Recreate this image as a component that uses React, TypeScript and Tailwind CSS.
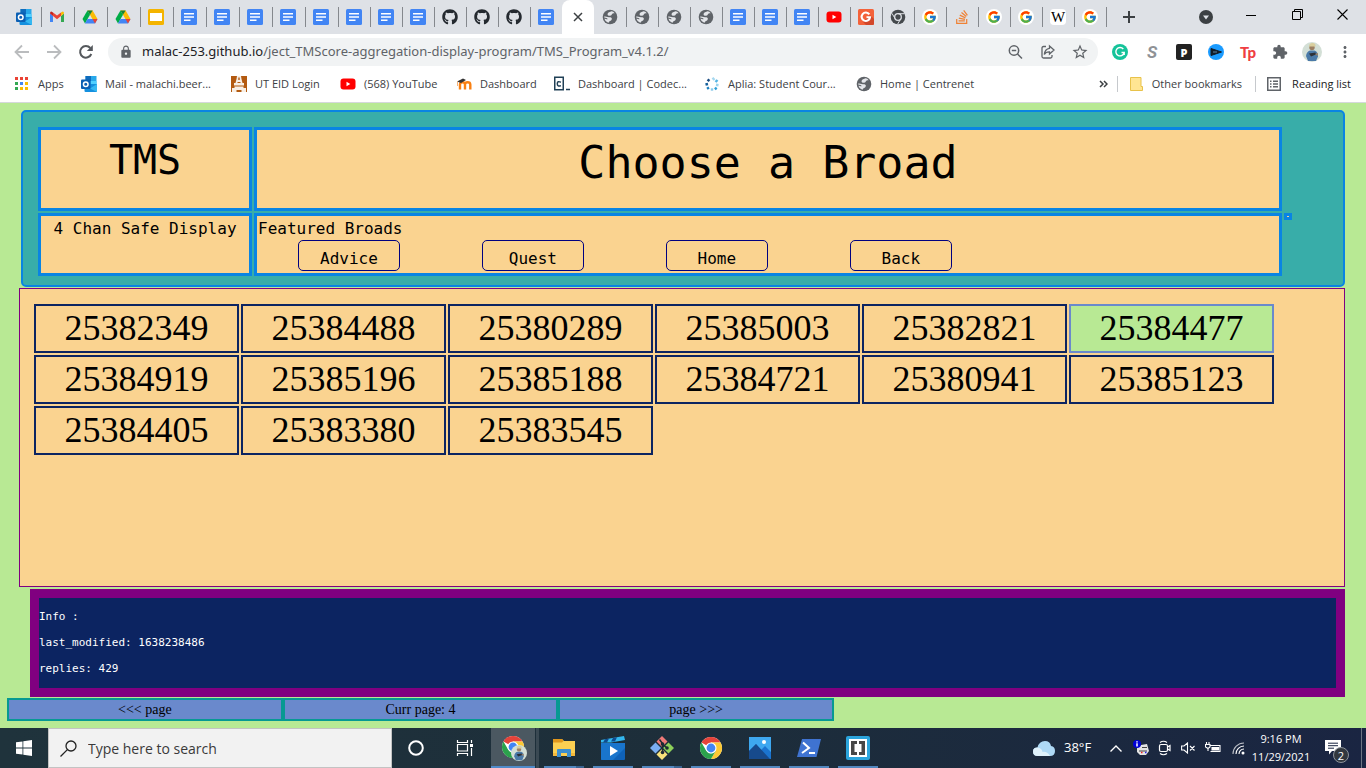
import { useState } from "react";
import type { ReactNode } from "react";
import { FaGithub, FaStackOverflow } from "react-icons/fa";
import { FcGoogle } from "react-icons/fc";
import { MdLock, MdExtension, MdMoreVert, MdStarBorder } from "react-icons/md";

/* ---------- favicons ---------- */

const Outlook = () => (
  <svg viewBox="0 0 16 16" className="size-4">
    <rect x="4.5" y="0" width="11" height="11" fill="#28a8ea" />
    <rect x="4.5" y="0" width="5.5" height="5" fill="#0f6cbd" />
    <rect x="10" y="5" width="5.5" height="4" fill="#50d0ff" />
    <path d="M3.500 8 L16 8 V15 Q16 16 15 16 H4.500 Q3.500 16 3.500 15Z" fill="#1490df" />
    <path d="M16 8 L9 12.500 L16 16Z" fill="#35b8f1" />
    <rect x="0" y="3.500" width="9.500" height="9.500" rx="1" fill="#0a5fb4" />
    <circle cx="4.750" cy="8.250" r="2.300" fill="none" stroke="#fff" strokeWidth="1.500" />
  </svg>
);

const Gmail = () => (
  <svg viewBox="0 0 16 16" className="size-4">
    <path d="M1 4.500V13h3V7Z" fill="#4285f4" />
    <path d="M15 4.500V13h-3V7Z" fill="#34a853" />
    <path d="M1 4.500 4 7V3.500L2.800 2.700Q1 2.200 1 4.500Z" fill="#c5221f" />
    <path d="M15 4.500 12 7V3.500L13.200 2.700Q15 2.200 15 4.500Z" fill="#fbbc04" />
    <path d="M4 3.500 8 6.500 12 3.500V7L8 10.200 4 7Z" fill="#ea4335" />
  </svg>
);

const Drive = () => (
  <svg viewBox="0 0 16 16" className="size-4">
    <path d="M5.400 1.500H10.600L15.500 10H10.400L8 5.800Z" fill="#fbbc04" />
    <path d="M5.400 1.500H10.600L8 5.800Z" fill="#188038" />
    <path d="M.5 10 5.400 1.500 8 5.800 3 14.500Z" fill="#00ac47" />
    <path d="M5.500 10H15.500L13 14.500H3Z" fill="#4285f4" />
    <path d="M10.500 10H15.500L13 14.500Z" fill="#ea4335" />
  </svg>
);

const Slides = () => (
  <svg viewBox="0 0 16 16" className="size-4">
    <rect width="16" height="16" rx="1.500" fill="#f4b400" />
    <rect x="2" y="4" width="12" height="8" fill="#fff" />
  </svg>
);

const Docs = () => (
  <svg viewBox="0 0 16 16" className="size-4">
    <rect width="16" height="16" rx="1.500" fill="#4285f4" />
    <path d="M3 4h10v1.500H3zM3 7.200h10v1.500H3zM3 10.500h6.500v1.500H3z" fill="#fff" />
  </svg>
);

const GitHub = () => <FaGithub className="size-4 text-[#24292f]" />;

const Globe = () => (
  <svg viewBox="0 0 16 16" className="size-4">
    <circle cx="8" cy="8" r="7.300" fill="#5f6368" />
    <path d="M9.500 2.300Q5.500 3.500 5.500 5.300 5.500 6.800 7.500 6.800 9.500 6.800 9.800 5.500 10.500 4.200 11.800 4.300L12.700 4.200Q11.500 2.500 9.500 2.300Z" fill="#e4e6ea" />
    <path d="M2.200 7.500Q4 7.200 5.500 8 7 8.200 8.500 8.200 10.300 8.800 9.800 10.300 9.500 12 7.500 12.200L6.500 13.700Q3 12.500 2.500 9.500 4.500 10.700 5.800 10 5 8.500 2.200 8.500Z" fill="#e4e6ea" />
  </svg>
);

const YouTube = () => (
  <svg viewBox="0 0 16 16" className="size-4">
    <rect x="0.500" y="2.500" width="15" height="11" rx="3" fill="#f00" />
    <path d="M6.500 5.700v4.600L10.300 8z" fill="#fff" />
  </svg>
);

const OrangeG = () => (
  <svg viewBox="0 0 16 16" className="size-4">
    <rect width="16" height="16" rx="1.500" fill="#f4623a" />
    <path d="M5 13 12 6 16 10V14.500Q16 16 14.500 16H8Z" fill="#d2472a" />
    <path d="M11.300 5.400A4.200 4.200 0 1 0 12 8.300H8.500" fill="none" stroke="#fff" strokeWidth="2.100" />
  </svg>
);

const DarkChrome = () => (
  <svg viewBox="0 0 16 16" className="size-4">
    <circle cx="8" cy="8" r="7.300" fill="#45494d" />
    <circle cx="8" cy="8" r="3.300" fill="none" stroke="#dee1e6" strokeWidth="1.300" />
    <path d="M8 4.700H14.700M5.200 9.700 1.900 4.300M10.800 9.700 7.600 15.200" stroke="#dee1e6" strokeWidth="1" />
  </svg>
);

const Google = () => (
  <span className="flex size-4 items-center justify-center rounded-full bg-white">
    <FcGoogle className="size-[14px]" />
  </span>
);

const Stack = () => <FaStackOverflow className="size-4 text-[#ef8236]" />;

const Wiki = () => (
  <span className="flex size-4 items-center justify-center rounded-sm bg-white font-['Liberation_Serif',serif] text-[15px] leading-none text-black">
    W
  </span>
);

const AppsGrid = () => (
  <svg viewBox="0 0 16 16" className="size-4">
    {["#ea4335", "#ea4335", "#ea4335", "#34a853", "#4285f4", "#fbbc04", "#34a853", "#fbbc04", "#fbbc04"].map((c, i) => (
      <rect key={i} x={1 + (i % 3) * 5} y={1 + Math.floor(i / 3) * 5} width="3" height="3" fill={c} />
    ))}
  </svg>
);

const Tower = () => (
  <svg viewBox="0 0 16 16" className="size-4">
    <rect width="16" height="16" fill="#b35a10" />
    <path d="M6 0h4l.5 3 1 4h1.500v2.500H3V7h1.500l1-4z" fill="#f7efe6" />
    <path d="M3.500 10.500h9V12H15v4h-4.500v-2h-5v2H1v-4h2.500z" fill="#f7efe6" />
    <path d="M7.300 1.500h1.400V4H7.300zM6.500 6h3v1h-3z" fill="#b35a10" />
  </svg>
);

const Moodle = () => (
  <svg viewBox="0 0 16 16" className="size-4">
    <path d="M4 13.500V8.500q0-2.300 2.500-2.300T9 8.500v5M9 8.500q0-2.300 2.600-2.300T14.300 8.500v5" fill="none" stroke="#f98012" strokeWidth="2.400" />
    <path d="M1 5.500 7 2.500 10 4 5 7Z" fill="#333" />
    <path d="M1.500 5.500V10" stroke="#f3b27a" strokeWidth="1" />
  </svg>
);

const Codecademy = () => (
  <svg viewBox="0 0 16 16" className="size-4">
    <rect x="0.750" y="1.250" width="8.500" height="12.500" fill="none" stroke="#204056" strokeWidth="1.500" />
    <path d="M6.900 6.200Q3.300 4.500 3.300 7.800T6.900 9.600M12 13.500h4" fill="none" stroke="#204056" strokeWidth="1.500" />
  </svg>
);

const Aplia = () => (
  <svg viewBox="0 0 16 16" className="size-4" fill="none" strokeWidth="2.400">
    <path d="M8.500 1.800 10.500 4" stroke="#a7d8ef" />
    <path d="M13.500 4 11.500 6" stroke="#54b4e4" />
    <path d="M14.500 9.200 12 8.800" stroke="#9dd4ee" />
    <path d="M12.500 13.500 11 11.500" stroke="#2e9fd8" />
    <path d="M8 14.700V12.300" stroke="#8dcbea" />
    <path d="M3 12.800 5 11.500" stroke="#1c7fc0" />
    <path d="M1.500 8.500 4 8" stroke="#155f9a" />
    <path d="M3.500 3.500 5.500 5" stroke="#184a80" />
  </svg>
);

/* ---------- browser chrome ---------- */

type Tab = { icon: () => ReactNode; title: string };
const tab = (icon: () => ReactNode, title: string): Tab => ({ icon, title });

const wideTabs: Tab[] = [
  tab(Outlook, "Outlook"),
  tab(Gmail, "Gmail"),
  tab(Drive, "Drive"),
  tab(Drive, "Drive"),
  tab(Slides, "Slides"),
  ...Array.from({ length: 5 }, () => tab(Docs, "Docs")),
];
const leftTabs: Tab[] = [
  ...Array.from({ length: 3 }, () => tab(Docs, "Docs")),
  ...Array.from({ length: 3 }, () => tab(GitHub, "GitHub")),
  tab(Docs, "Docs"),
];
const rightTabs: Tab[] = [
  ...Array.from({ length: 4 }, () => tab(Globe, "Page")),
  ...Array.from({ length: 3 }, () => tab(Docs, "Docs")),
  tab(YouTube, "YouTube"),
  tab(OrangeG, "G"),
  tab(DarkChrome, "Chrome"),
  tab(Google, "Google"),
  tab(Stack, "Stack Overflow"),
  tab(Google, "Google"),
  tab(Google, "Google"),
  tab(Wiki, "Wikipedia"),
  tab(Google, "Google"),
];

function TabButton({ item, wide, first }: { item: Tab; wide?: boolean; first?: boolean }) {
  const Icon = item.icon;
  return (
    <button aria-label={item.title} className={`relative flex h-[34px] shrink-0 items-center pl-2 ${wide ? "w-[33px]" : "w-8"}`}>
      {!first && <span className="absolute top-[7px] left-0 h-5 w-px bg-[#85888d]" />}
      <Icon />
    </button>
  );
}

function TabStrip() {
  return (
    <div className="flex h-[34px] items-center bg-[#dee1e6] pl-2">
      {wideTabs.map((t, i) => (
        <TabButton key={i} item={t} wide first={i === 0} />
      ))}
      {leftTabs.map((t, i) => (
        <TabButton key={i} item={t} />
      ))}
      <button aria-label="Close tab" className="flex h-[34px] w-8 shrink-0 items-center justify-center rounded-t-lg bg-white">
        <svg viewBox="0 0 10 10" className="size-[10px]" stroke="#3c4043" strokeWidth="1.500">
          <path d="M1 1 9 9M9 1 1 9" />
        </svg>
      </button>
      {rightTabs.map((t, i) => (
        <TabButton key={i} item={t} first={i === 0} />
      ))}
      <span className="h-5 w-px bg-[#85888d]" />
      <button aria-label="New tab" className="ml-4">
        <svg viewBox="0 0 12 12" className="size-3" stroke="#3c4043" strokeWidth="2">
          <path d="M6 0V12M0 6H12" />
        </svg>
      </button>
      <div className="ml-auto flex items-center pr-[18px]">
        <button aria-label="Search tabs" className="mr-[33px]">
          <svg viewBox="0 0 14 14" className="size-[14px]">
            <circle cx="7" cy="7" r="7" fill="#3c4043" />
            <path d="M4 5.500h6L7 9.500z" fill="#dee1e6" />
          </svg>
        </button>
        <button aria-label="Minimize" className="mr-9 mb-1">
          <svg viewBox="0 0 10 10" className="size-[10px]" stroke="#000"><path d="M0 5.500H10" /></svg>
        </button>
        <button aria-label="Restore" className="mr-[34px] mb-1.5">
          <svg viewBox="0 0 11 11" className="size-[11px]" stroke="#000" fill="none">
            <path d="M.5 2.500h8v8h-8zM2.500 2.500v-2h8v8h-2" />
          </svg>
        </button>
        <button aria-label="Close" className="mb-1.5">
          <svg viewBox="0 0 11 11" className="size-[11px]" stroke="#000" strokeWidth="1.100"><path d="M.5.5 10.500 10.500M10.500.5.5 10.500" /></svg>
        </button>
      </div>
    </div>
  );
}

const Person = ({ className }: { className: string }) => (
  <svg viewBox="0 0 20 20" className={className}>
    <circle cx="10" cy="10" r="10" fill="#d3dfd6" />
    <path d="M4 14Q4.500 9.500 8 8.500h4.500q3.500 1 3.500 6L14 19H6Z" fill="#4a7aa8" />
    <circle cx="10" cy="5.500" r="2.700" fill="#9c7f62" />
    <path d="M7 4.500Q7 1 10.500 1T13.500 4.500Z" fill="#d9cf9e" />
    <path d="M7 11.500 13.500 10.500 14 12.500 9 14.500Z" fill="#2b3138" />
    <path d="M13 12 16 11 15.500 14Z" fill="#9c7f62" />
  </svg>
);

function Toolbar() {
  return (
    <div className="flex h-9 items-center bg-white pr-3 pl-[14px]">
      <button aria-label="Back" className="w-8">
        <svg viewBox="0 0 16 16" className="size-4" fill="none" stroke="#babcbe" strokeWidth="1.800"><path d="M15 8H2M8 1.500 1.500 8 8 14.500" /></svg>
      </button>
      <button aria-label="Forward" className="w-8">
        <svg viewBox="0 0 16 16" className="size-4" fill="none" stroke="#babcbe" strokeWidth="1.800"><path d="M1 8H14M8 1.500 14.500 8 8 14.500" /></svg>
      </button>
      <button aria-label="Reload" className="mr-[14px]">
        <svg viewBox="0 0 16 16" className="size-4" fill="none" stroke="#54585c" strokeWidth="2">
          <path d="M13.300 10A5.800 5.800 0 1 1 12.300 4" />
          <path d="M14.800 1V7H8.800Z" fill="#54585c" stroke="none" />
        </svg>
      </button>
      <div className="flex h-7 flex-1 items-center rounded-full bg-[#f1f3f4] pr-[9px] pl-[11px]">
        <MdLock className="mr-[9px] size-[14px] shrink-0 text-[#5f6368]" />
        <span className="flex-1 font-['Noto_Sans',sans-serif] text-[13px] whitespace-nowrap text-[#5f6368]">
          <span className="text-[#202124]">malac-253.github.io</span>/ject_TMScore-aggregation-display-program/TMS_Program_v4.1.2/
        </span>
        <button aria-label="Zoom" className="mr-4">
          <svg viewBox="0 0 16 16" className="size-4" fill="none" stroke="#5f6368" strokeWidth="1.500">
            <circle cx="7" cy="6.500" r="4.700" /><path d="M10.500 10 15 14.500M4.800 6.500h4.400" />
          </svg>
        </button>
        <button aria-label="Share" className="mr-4">
          <svg viewBox="0 0 16 16" className="size-4" fill="none" stroke="#5f6368" strokeWidth="1.300">
            <path d="M7 2.500H4.500Q3 2.500 3 4V12.500Q3 14 4.500 14H11.500Q13 14 13 12.500V11" />
            <path d="M10.500 2 15 6 10.500 10V7.800Q7 7.600 5.300 10.500 5.800 5 10.500 4.300Z" />
          </svg>
        </button>
        <button aria-label="Bookmark"><MdStarBorder className="size-[18px] text-[#5f6368]" /></button>
      </div>
      <div className="ml-[14px] flex items-center gap-4">
        <svg viewBox="0 0 16 16" className="size-4">
          <circle cx="8" cy="8" r="8" fill="#15c39a" />
          <path d="M11.300 5A4.200 4.200 0 1 0 12.200 8.500H9.500M12.200 8.300V11" fill="none" stroke="#fff" strokeWidth="1.400" />
        </svg>
        <span className="w-4 text-center font-['Roboto',sans-serif] text-[17px] leading-none font-bold text-[#8f9296] italic">S</span>
        <span className="flex size-4 items-center justify-center rounded-xs bg-[#222] font-['Open_Sans',sans-serif] text-[11px] leading-none font-extrabold text-white">P</span>
        <svg viewBox="0 0 16 16" className="size-4">
          <circle cx="8" cy="8" r="8" fill="#1a9bff" /><path d="M3 4.500 13.500 8 3 11.500Z" fill="#111c28" stroke="#111c28" /><path d="M5 8h4" stroke="#5f86a5" strokeWidth="1" />
        </svg>
        <span className="w-4 font-['Lato',sans-serif] text-[15px] leading-none font-black text-[#ef3e42]">Tp</span>
        <MdExtension className="size-4 text-[#5f6368]" />
        <Person className="-mx-0.5 size-5" />
        <button aria-label="Menu"><MdMoreVert className="size-[18px] text-[#5f6368]" /></button>
      </div>
    </div>
  );
}

const bookmarks = [
  { icon: AppsGrid, label: "Apps", width: "w-[67px]" },
  { icon: Outlook, label: "Mail - malachi.beer...", width: "w-[150px]" },
  { icon: Tower, label: "UT EID Login", width: "w-[109px]" },
  { icon: YouTube, label: "(568) YouTube", width: "w-[116px]" },
  { icon: Moodle, label: "Dashboard", width: "w-[98px]" },
  { icon: Codecademy, label: "Dashboard | Codec...", width: "w-[150px]" },
  { icon: Aplia, label: "Aplia: Student Cour...", width: "w-[152px]" },
  { icon: Globe, label: "Home | Centrenet", width: "w-[130px]" },
];

function BookmarksBar() {
  return (
    <nav className="flex h-[33px] items-center border-b border-[#d5d8dc] bg-white pr-[15px] pb-1 pl-[14px] text-[11px] whitespace-nowrap text-[#3c4043]">
      {bookmarks.map(({ icon: Icon, label, width }) => (
        <a key={label} href="#" className={`flex shrink-0 items-center gap-2 ${width}`}>
          <Icon />
          {label}
        </a>
      ))}
      <button aria-label="More bookmarks" className="mr-[9px] ml-auto">
        <svg viewBox="0 0 9 8" className="h-2 w-[9px]" fill="none" stroke="#3c4043" strokeWidth="1.500"><path d="M1 1 4 4 1 7M5 1 8 4 5 7" /></svg>
      </button>
      <span className="h-4 w-px bg-[#c6c9cd]" />
      <a href="#" className="mr-[13px] ml-3 flex items-center gap-[9px]">
        <svg viewBox="0 0 13 14" className="h-[14px] w-[13px]">
          <path d="M.5.500H11V9.500H12.500V13.500H.5Z" fill="#ffe592" stroke="#e8c24a" />
        </svg>
        Other bookmarks
      </a>
      <span className="h-4 w-px bg-[#c6c9cd]" />
      <a href="#" className="ml-[11px] flex items-center gap-[11px] text-[#202124]">
        <svg viewBox="0 0 14 14" className="size-[14px]" fill="none" stroke="#5f6368" strokeWidth="1.500">
          <rect x="0.750" y="0.750" width="12.500" height="12.500" />
          <path d="M3 4.200h1.500M3 7h1.500M3 9.800h1.500M6 4.200h5M6 7h5M6 9.800h5" />
        </svg>
        Reading list
      </a>
    </nav>
  );
}

/* ---------- page ---------- */

const threads = [
  "25382349", "25384488", "25380289", "25385003", "25382821", "25384477",
  "25384919", "25385196", "25385188", "25384721", "25380941", "25385123",
  "25384405", "25383380", "25383545",
];

function Page() {
  const [selected, setSelected] = useState("25384477");
  return (
    <main className="flex-1 bg-[#b8e994] py-[7px] text-black">
      <header className="mx-[21px] rounded-[5px] border-2 border-[#0984e3] bg-[#38ada9] pt-[15px] pr-[51px] pb-[9px] pl-[15px] font-['DejaVu_Sans_Mono',monospace] text-[16px] leading-[22px]">
        <div className="grid grid-cols-[214px_1fr_8px] grid-rows-[84px_63px] gap-0.5">
          <div className="border-[3px] border-[#0984e3] bg-[#fad390] pt-1 text-center text-[40px] leading-[52px]">TMS</div>
          <h1 className="border-[3px] border-[#0984e3] bg-[#fad390] pt-1 text-center text-[45px] leading-[58px] font-normal">Choose a Broad</h1>
          <span />
          <div className="border-[3px] border-[#0984e3] bg-[#fad390] px-px pt-0.5 text-center whitespace-nowrap">4 Chan Safe Display</div>
          <div className="border-[3px] border-[#0984e3] bg-[#fad390]">
            <p className="h-6 pt-0.5 pl-px">Featured Broads</p>
            <div className="flex">
              {["Advice", "Quest", "Home", "Back"].map((label) => (
                <button key={label} className="mx-[4%] h-[31px] w-[10%] rounded-[5px] border border-[#000080] pt-1.5">
                  {label}
                </button>
              ))}
            </div>
          </div>
          <div className="h-[7px] border-[3px] border-[#0984e3] bg-[#fad390]" />
        </div>
      </header>

      <section className="mt-px mr-[21px] ml-[19px] min-h-[299px] border border-[#800080] bg-[#fad390] pt-[15px] pl-[14px]">
        <div className="flex flex-wrap gap-0.5 font-['Liberation_Serif',serif] text-[36px] leading-[45px]">
          {threads.map((id) => (
            <button
              key={id}
              onClick={() => setSelected(id)}
              className={`w-[205px] border-2 ${id === selected ? "border-[#6a89cc] bg-[#b8e994]" : "border-[#0c2461] bg-[#fad390]"}`}
            >
              {id}
            </button>
          ))}
        </div>
      </section>

      <section className="mt-0.5 mr-[21px] ml-[30px] flex flex-col gap-3 border-[9px] border-[#800080] bg-[#0c2461] py-3 font-['DejaVu_Sans_Mono',monospace] text-[11px] leading-[14px] text-white">
        <p>Info :</p>
        <p>last_modified: 1638238486</p>
        <p>replies: 429</p>
      </section>

      <div className="mt-px ml-[7px] flex w-[827px] font-['Liberation_Serif',serif] text-[14px] leading-[19px]">
        <button className="flex-1 border-2 border-[#079992] bg-[#6a89cc]">&lt;&lt;&lt; page</button>
        <div className="flex-1 border-2 border-[#079992] bg-[#6a89cc] text-center">Curr page: 4</div>
        <button className="flex-1 border-2 border-[#079992] bg-[#6a89cc]">page &gt;&gt;&gt;</button>
      </div>
    </main>
  );
}

/* ---------- taskbar ---------- */

const ChromeLogo = () => (
  <svg viewBox="0 0 24 24" className="size-6">
    <circle cx="12" cy="12" r="11" fill="#fff" />
    <path d="M12 12 2.470 6.500A11 11 0 0 1 21.530 6.500H12Z" fill="#e5433a" />
    <path d="M12 6.500H21.530A11 11 0 0 1 12 23L16.760 14.750Z" fill="#fcc934" />
    <path d="M2.470 6.500A11 11 0 0 0 12 23L16.760 14.750 12 17.500 7.240 14.750Z" fill="#2ba24c" />
    <circle cx="12" cy="12" r="5.500" fill="#fff" />
    <circle cx="12" cy="12" r="4.400" fill="#4285f4" />
  </svg>
);

const ChromeProfile = () => (
  <span className="relative">
    <ChromeLogo />
    <Person className="absolute top-2.5 left-2.5 size-4" />
  </span>
);

const Explorer = () => (
  <svg viewBox="0 0 24 24" className="size-6">
    <path d="M1 3H10L12 5H23V20H1Z" fill="#fccf52" />
    <path d="M1 3H10L11.500 5 10 6.500H1Z" fill="#e0961c" />
    <path d="M5 21V14Q5 13 6 13H18Q19 13 19 14V21H15V17H9V21Z" fill="#3c8fd0" />
    <path d="M1 17H5V20H1ZM19 17H23V20H19Z" fill="#f5b93b" />
  </svg>
);

const Movies = () => (
  <svg viewBox="0 0 24 24" className="size-6">
    <rect x="0" y="7" width="24" height="17" rx="1" fill="#0f62b8" />
    <path d="M0 7H24V12L12 24H1Q0 24 0 23Z" fill="#1975cc" />
    <path d="M0 4 23 0 24 4 10 6.500H0Z" fill="#33b7ee" />
    <path d="M4 3.300 8 2.600 6 6.500H2ZM12 2 16 1.200 14 5.500H10Z" fill="#0f4c92" />
    <path d="M9 10V20L17 15Z" fill="#fff" />
  </svg>
);

const Git = () => (
  <svg viewBox="0 0 24 24" className="size-6">
    <path d="M12 0 17.500 5.500 12 11 6.500 5.500Z" fill="#f07a78" />
    <path d="M18.500 6.500 24 12 18.500 17.500 13 12Z" fill="#8ed15a" />
    <path d="M12 13 17.500 18.500 12 24 6.500 18.500Z" fill="#f9e27c" />
    <path d="M5.500 6.500 11 12 5.500 17.500 0 12Z" fill="#7aaef2" />
    <path d="M9.500 3.500 12.500 7.500V17M12.500 8 17 12" fill="none" stroke="#1d2a33" strokeWidth="1.500" />
    <circle cx="12.500" cy="8" r="1.800" fill="#1d2a33" /><circle cx="17" cy="12" r="1.800" fill="#1d2a33" /><circle cx="12.500" cy="16.500" r="1.800" fill="#1d2a33" />
  </svg>
);

const Photos = () => (
  <svg viewBox="0 0 24 24" className="size-6">
    <rect x="1" y="1" width="22" height="22" fill="#1b74d0" />
    <path d="M1 1H23V16L17 10 13 14 8 8 1 15Z" fill="#3ea8f0" />
    <path d="M1 15 8 8 22 23H1Z" fill="#174a8c" />
    <circle cx="16" cy="6" r="2" fill="#fff" />
  </svg>
);

const PowerShell = () => (
  <svg viewBox="0 0 24 24" className="size-6">
    <path d="M5 3H24L19.500 21H0Z" fill="#3f73d1" />
    <path d="M6 6.500 12 12 5 17M12 17h6" fill="none" stroke="#fff" strokeWidth="2" />
  </svg>
);

const Brackets = () => (
  <svg viewBox="0 0 24 24" className="size-6">
    <rect width="24" height="24" rx="2" fill="#2ba4dc" />
    <rect x="3" y="3" width="18" height="18" fill="#fff" />
    <path d="M5 5h6v3H8.500v8H11v3H5zM19 5h-6v3h2.500v8H13v3h6z" fill="#474747" />
  </svg>
);

const taskApps = [
  { name: "File Explorer", icon: Explorer },
  { name: "Movies & TV", icon: Movies },
  { name: "Git", icon: Git },
  { name: "Google Chrome", icon: ChromeLogo },
  { name: "Photos", icon: Photos },
  { name: "PowerShell", icon: PowerShell },
  { name: "Brackets", icon: Brackets },
];

function Taskbar() {
  return (
    <footer className="flex h-10 items-center bg-linear-to-r from-[#1f333c] via-[#1d2e3a] to-[#1a2542] text-white">
      <button aria-label="Start" className="flex h-10 w-12 items-center justify-center">
        <svg viewBox="0 0 16 16" className="size-4" fill="#fff">
          <path d="M0 2.300 6.500 1.400V7.600H0ZM7.300 1.300 16 0V7.600H7.300ZM0 8.400H6.500V14.600L0 13.700ZM7.300 8.400H16V16L7.300 14.700Z" />
        </svg>
      </button>
      <label className="flex h-10 w-[344px] items-center border border-[#c3c3c3] bg-[#f2f2f2] pl-[11px]">
        <svg viewBox="0 0 17 17" className="mr-[11px] size-[17px]" fill="none" stroke="#222" strokeWidth="1.300">
          <circle cx="11" cy="6" r="5" /><path d="M7.400 9.600.5 16.500" />
        </svg>
        <input aria-label="Search" placeholder="Type here to search" className="min-w-0 flex-1 bg-transparent text-[14px] outline-none placeholder:text-[#3a3a3a]" />
      </label>
      <button aria-label="Cortana" className="flex w-12 justify-center">
        <svg viewBox="0 0 16 16" className="size-4"><circle cx="8" cy="8" r="6.800" fill="none" stroke="#fff" strokeWidth="2" /></svg>
      </button>
      <button aria-label="Task view" className="flex w-[49px] justify-center">
        <svg viewBox="0 0 18 16" className="h-4 w-[18px]" fill="none" stroke="#fff" strokeWidth="1.200">
          <path d="M1.500 4.500h10v6.500h-10zM1.500 0V2.500h10V0M1.500 16V13.500h10V16M15.500 0V3M15.500 8V16" /><path d="M14 4h3v3h-3z" fill="#fff" stroke="none" />
        </svg>
      </button>
      <button aria-label="Google Chrome profile" className="relative mx-0.5 flex h-10 w-11 items-center justify-center border-b-2 border-[#4f8ac9] bg-[#4b5861]">
        <ChromeProfile />
        <span className="absolute top-0 -right-1 h-10 w-[3px] bg-[#3a4953]" />
      </button>
      <div className="ml-0.5 flex">
        {taskApps.map(({ name, icon: Icon }, i) => (
          <button key={name} aria-label={name} className="flex h-10 w-[49px] flex-col items-center justify-between pt-2">
            <span className="flex h-6 items-center"><Icon /></span>
            <span className={`h-0.5 w-10 ${i === 0 || i === 2 ? "bg-linear-to-r from-[#5287bf] from-80% to-[#3b6491] to-80%" : "bg-[#5287bf]"}`} />
          </button>
        ))}
      </div>
      <div className="ml-auto flex h-10 items-center">
        <svg viewBox="0 0 22 15" className="mr-[9px] h-[15px] w-[22px]">
          <path d="M5 15Q0 15 0 10.500 0 6.500 4.500 6.500 6 0 12 0 17 0 18 5 22 5.500 22 10 22 15 17 15Z" fill="#aed9f5" />
          <path d="M5 15Q0 15 0 10.500 0 6.500 4.500 6.500 9 7 9.500 11 14 10 17 15Z" fill="#dff1fb" />
        </svg>
        <span className="w-[46px] text-[13px]">38°F</span>
        <svg viewBox="0 0 12 7" className="mr-[11px] h-[7px] w-3" fill="none" stroke="#fff" strokeWidth="1.400"><path d="M.5 6.500 6 1 11.500 6.500" /></svg>
        <svg viewBox="0 0 16 16" className="mr-[9px] size-4">
          <path d="M4 8 8 5 14 4 16 11 13 15H7L4 12Z" fill="#e4e4e4" /><path d="M6 11h8M9 7.500h5" stroke="#444" /><path d="M8 12.500h1.500" stroke="#e22" strokeWidth="1.500" /><path d="M12 12.500h1.500" stroke="#22e" strokeWidth="1.500" />
          <circle cx="4" cy="4" r="4" fill="#0000d8" /><path d="M4 1.200v1.300M4 3.300V6.500" stroke="#fff" strokeWidth="1.500" />
        </svg>
        <svg viewBox="0 0 14 16" className="mr-[9px] h-4 w-[14px]" fill="none" stroke="#fff" strokeWidth="1.200">
          <rect x="1.500" y="4.500" width="8" height="7" rx="1.500" /><path d="M9.500 7 12 5.500V10.500L9.500 9M2 2.500Q5.500 0 9 2.500M2 13.500Q5.500 16 9 13.500" />
        </svg>
        <svg viewBox="0 0 15 12" className="mr-[9px] h-3 w-[15px]" fill="none" stroke="#fff" strokeWidth="1.100">
          <path d="M.6 4H3L6.500 1V11L3 8H.6ZM9 4 13.500 8.500M13.500 4 9 8.500" />
        </svg>
        <svg viewBox="0 0 16 12" className="mr-[11px] h-3 w-4" fill="none" stroke="#fff" strokeWidth="1.100">
          <path d="M5 3.500h10v6H5.500M1.500 0V2M4 0V2M.5 2.500h4.500V5L3 6.500.5 5ZM3 6.500V9" /><path d="M7 5.500h6.500v2.500H7z" fill="#fff" />
        </svg>
        <svg viewBox="0 0 13 13" className="mr-1.5 size-[13px]" fill="none" stroke="#fff" strokeWidth="1.100">
          <path d="M1 12A11 11 0 0 1 12 1" opacity=".7" /><path d="M4 12A8 8 0 0 1 12 4M7 12A5 5 0 0 1 12 7" /><circle cx="11" cy="11" r="1.500" fill="#fff" stroke="none" />
        </svg>
        <div className="w-[60px] text-center text-[11px] leading-[18px] whitespace-nowrap">
          <p>9:16 PM</p>
          <p>11/29/2021</p>
        </div>
        <button aria-label="Notifications" className="relative mr-[14px] ml-[14px] flex h-10 w-[22px] items-start pt-3">
          <svg viewBox="0 0 16 15" className="h-[15px] w-4">
            <path d="M0 0H16V11H7L4 14.500V11H0Z" fill="#fff" /><path d="M3 3.200h10M3 5.700h10M3 8.200h6" stroke="#1a2542" strokeWidth="1" />
          </svg>
          <span className="absolute top-[19px] left-2 flex size-4 items-center justify-center rounded-full border border-[#8c939b] bg-[#32383f] text-[11px] leading-none">2</span>
        </button>
        <span className="mr-1 h-10 w-px bg-[#6d7583]" />
      </div>
    </footer>
  );
}

export default function App() {
  return (
    <div className="flex min-h-screen flex-col bg-white font-['Open_Sans','Noto_Sans',sans-serif]">
      <TabStrip />
      <Toolbar />
      <BookmarksBar />
      <Page />
      <Taskbar />
    </div>
  );
}
